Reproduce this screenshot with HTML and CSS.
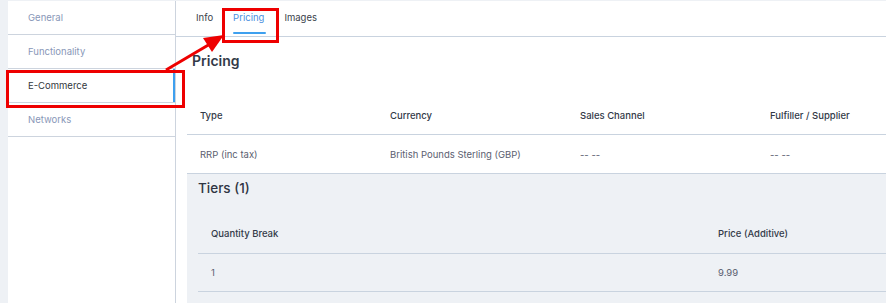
FILE: index.html
```html
<!DOCTYPE html>
<html>
<head>
<meta charset="utf-8">
<link rel="stylesheet" href="styles.css">
</head>
<body>
<div class="page">
  <nav class="sidebar">
    <div class="side-item">General</div>
    <div class="side-item">Functionality</div>
    <div class="side-item active">E-Commerce</div>
    <div class="side-item">Networks</div>
  </nav>
  <main class="main">
    <div class="tabs">
      <div class="tab">Info</div>
      <div class="tab active">Pricing</div>
      <div class="tab">Images</div>
    </div>
    <div class="content">
      <h2 class="title">Pricing</h2>
      <div class="table">
        <div class="row head">
          <div class="cell">Type</div>
          <div class="cell">Currency</div>
          <div class="cell">Sales Channel</div>
          <div class="cell">Fulfiller / Supplier</div>
        </div>
        <div class="row">
          <div class="cell">RRP (inc tax)</div>
          <div class="cell">British Pounds Sterling (GBP)</div>
          <div class="cell">-- --</div>
          <div class="cell">-- --</div>
        </div>
      </div>
      <section class="tiers">
        <h3 class="tiers-title">Tiers (1)</h3>
        <div class="tier-table">
          <div class="trow head">
            <div class="tcell">Quantity Break</div>
            <div class="tcell">Price (Additive)</div>
          </div>
          <div class="trow">
            <div class="tcell">1</div>
            <div class="tcell">9.99</div>
          </div>
        </div>
      </section>
    </div>
  </main>
</div>
<div class="mark mark-side"></div>
<div class="mark mark-tab"></div>
<svg class="arrow" width="886" height="303" viewBox="0 0 886 303">
  <line x1="166" y1="70" x2="210" y2="44" stroke="#ee0000" stroke-width="3"/>
  <polygon points="224,35 203,38 212,52" fill="#ee0000"/>
</svg>
</body>
</html>
```
FILE: styles.css
```css
* { box-sizing: border-box; margin: 0; padding: 0; }
html, body { width: 886px; height: 303px; overflow: hidden; }
body {
  background: #eef1f5;
  font-family: "Inter", "Open Sans", sans-serif;
  font-size: 9.5px;
  color: #3a3f4b;
  position: relative;
}
.page {
  display: flex;
  height: 303px;
  padding: 1px 0 0 8px;
  overflow: hidden;
}
.sidebar {
  width: 168px;
  background: #fff;
  border-right: 1px solid #cdd4de;
  flex: none;
}
.side-item {
  height: 34px;
  border-bottom: 1px solid #cdd4de;
  display: flex;
  align-items: center;
  padding-left: 20px;
  padding-bottom: 1px;
  color: #8997b8;
  position: relative;
}
.side-item.active { color: #333840; }
.side-item.active::after {
  content: "";
  position: absolute;
  right: 0;
  top: 0;
  bottom: 0;
  width: 2px;
  background: #3ea0ef;
}
.main {
  flex: 1;
  background: #fff;
  min-width: 0;
  overflow: hidden;
}
.tabs {
  display: flex;
  height: 36px;
  border-bottom: 1px solid #c9d3df;
  padding-left: 20px;
  gap: 20px;
}
.tab {
  display: flex;
  align-items: center;
  color: #3a3f4b;
  position: relative;
  padding-bottom: 2px;
}
.tab.active { color: #4a8fe0; }
.tab.active::after {
  content: "";
  position: absolute;
  left: 0;
  right: -2px;
  bottom: 2px;
  height: 2px;
  background: #3ea0ef;
  border-radius: 1px;
}
.content { padding-left: 11px; overflow: hidden; height: 266px; }
.title {
  font-size: 14px;
  font-weight: 600;
  color: #333a48;
  padding: 15px 0 0 5px;
  height: 59px;
}
.table {
  display: grid;
  grid-template-columns: repeat(4, 190px);
}
.row { display: contents; }
.cell {
  height: 39px;
  border-bottom: 1px solid #c9d3df;
  display: flex;
  align-items: center;
  padding-left: 13px;
  color: #5b6070;
  white-space: nowrap;
}
.row.head .cell { font-weight: 500; color: #333a48; }
.tiers {
  background: #eef1f5;
  padding: 0 0 0 11px;
  height: 130px;
}
.tiers-title {
  font-size: 13.5px;
  font-weight: 500;
  color: #2f3542;
  height: 40px;
  padding-top: 6px;
}
.tier-table {
  display: grid;
  grid-template-columns: 507px 1fr;
}
.trow { display: contents; }
.tcell {
  height: 38px;
  border-bottom: 1px solid #c9d3df;
  display: flex;
  align-items: center;
  padding-left: 13px;
  color: #5b6070;
  white-space: nowrap;
}
.trow.head .tcell { height: 40px; font-weight: 500; color: #333a48; }
.mark {
  position: absolute;
  border: 3px solid #ee0000;
}
.mark-side { left: 6px; top: 70px; width: 179px; height: 38px; }
.mark-tab { left: 222px; top: 8px; width: 57px; height: 35px; }
.arrow { position: absolute; left: 0; top: 0; pointer-events: none; }
```
